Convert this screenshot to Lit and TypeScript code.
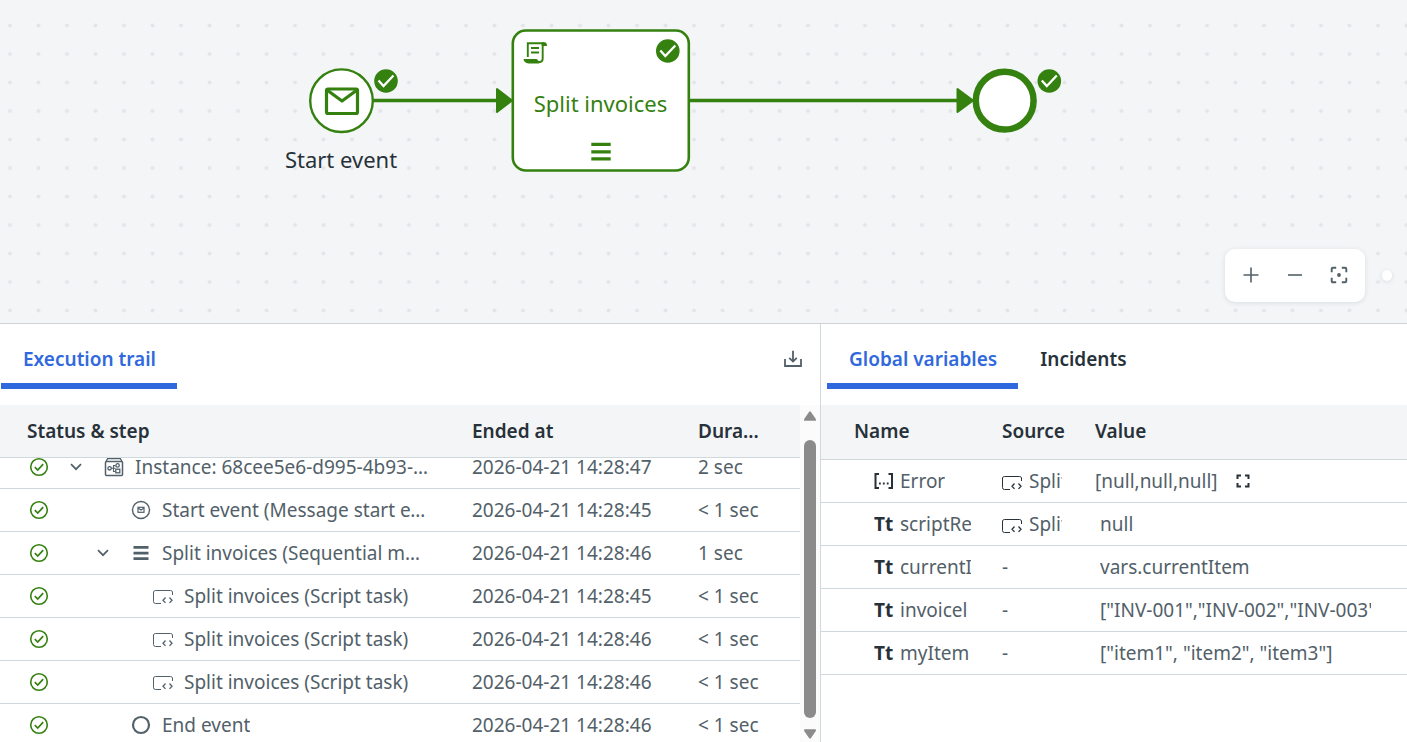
import { LitElement, html, css, svg, nothing } from "lit";
import { customElement } from "lit/decorators.js";
import { classMap } from "lit/directives/class-map.js";

type StepIcon = "instance" | "message" | "multi" | "script" | "end";

interface Step {
  level: "l0" | "l1" | "l2";
  open: boolean;
  icon: StepIcon;
  name: string;
  ended: string;
  duration: string;
}

interface Variable {
  name: string;
  list: boolean;
  source: string;
  value: string;
}

const STEPS: Step[] = [
  { level: "l0", open: true, icon: "instance", name: "Instance: 68cee5e6-d995-4b93-a1c7", ended: "2026-04-21 14:28:47", duration: "2 sec" },
  { level: "l1", open: false, icon: "message", name: "Start event (Message start event)", ended: "2026-04-21 14:28:45", duration: "< 1 sec" },
  { level: "l1", open: true, icon: "multi", name: "Split invoices (Sequential multi-instance)", ended: "2026-04-21 14:28:46", duration: "1 sec" },
  { level: "l2", open: false, icon: "script", name: "Split invoices (Script task)", ended: "2026-04-21 14:28:45", duration: "< 1 sec" },
  { level: "l2", open: false, icon: "script", name: "Split invoices (Script task)", ended: "2026-04-21 14:28:46", duration: "< 1 sec" },
  { level: "l2", open: false, icon: "script", name: "Split invoices (Script task)", ended: "2026-04-21 14:28:46", duration: "< 1 sec" },
  { level: "l1", open: false, icon: "end", name: "End event", ended: "2026-04-21 14:28:46", duration: "< 1 sec" },
];

const VARIABLES: Variable[] = [
  { name: "Error", list: true, source: "Split invoices", value: "[null,null,null]" },
  { name: "scriptResponse", list: false, source: "Split invoices", value: "null" },
  { name: "currentItem", list: false, source: "-", value: "vars.currentItem" },
  { name: "invoicel", list: false, source: "-", value: '["INV-001","INV-002","INV-003"]' },
  { name: "myItem", list: false, source: "-", value: '["item1", "item2", "item3"]' },
];

const scriptIcon = html`<svg width="20" height="16" viewBox="0 0 20 16" fill="none" stroke="currentColor" aria-hidden="true">
  <path d="M8 14.500H2.500A2 2 0 0 1 .5 12.500V3A2 2 0 0 1 2.500 1.500H17.500A2 2 0 0 1 19.500 3V6" stroke-width="1" />
  <path d="M12.500 8.500L10 11.200L12.500 13.900M16.500 8.500L19 11.200L16.500 13.900" stroke-width="1.300" />
</svg>`;

const STEP_ICONS: Record<StepIcon, unknown> = {
  instance: html`<svg width="20" height="20" viewBox="0 0 20 20" fill="none" stroke="currentColor" aria-hidden="true">
    <path d="M2 4.500L3.600 1.600H16.400L18 4.500" stroke-width="1.300" />
    <rect x="1.500" y="4.500" width="17" height="14" rx="1" stroke-width="1.500" />
    <circle cx="5.600" cy="11.300" r="1.700" stroke-width="1.300" />
    <path d="M7.300 11.300H11.500M9.500 11.300V8.600H11.500M9.500 11.300V14.500H11.500" stroke-width="1.100" />
    <circle cx="13.600" cy="8.400" r="1.700" stroke-width="1.300" />
    <rect x="11.800" y="12.200" width="4" height="3.600" stroke-width="1.300" />
  </svg>`,
  message: html`<svg width="20" height="20" viewBox="0 0 20 20" fill="none" stroke="currentColor" aria-hidden="true">
    <circle cx="10" cy="10" r="8.500" stroke-width="1.400" />
    <rect x="7" y="7.300" width="6" height="5" stroke-width="1.200" />
    <path d="M7 8L10 10L13 8" stroke-width="1.100" />
  </svg>`,
  multi: html`<svg width="20" height="20" viewBox="0 0 20 20" fill="currentColor" aria-hidden="true">
    <path d="M2.500 3H17.500V5.800H2.500ZM2.500 8.700H17.500V11.500H2.500ZM2.500 14.200H17.500V17H2.500Z" />
  </svg>`,
  script: scriptIcon,
  end: html`<svg width="20" height="20" viewBox="0 0 20 20" fill="none" stroke="currentColor" aria-hidden="true">
    <circle cx="10" cy="10" r="8" stroke-width="2.200" />
  </svg>`,
};

const statusIcon = html`<svg class="ok" width="20" height="20" viewBox="0 0 20 20" fill="none" stroke="currentColor" role="img" aria-label="Completed">
  <circle cx="10" cy="10" r="8.300" stroke-width="1.600" />
  <path d="M5.800 10.200L8.700 13L14.200 7.200" stroke-width="1.700" />
</svg>`;

const badge = (x: number, y: number) => svg`
  <circle class="fill" cx=${x} cy=${y} r="11.800" />
  <path class="tick" d="M${x - 7.5} ${y - 0.5}L${x - 2.5} ${y + 5}L${x + 7.5} ${y - 5.5}" />`;

@customElement("process-diagram")
export class ProcessDiagram extends LitElement {
  static styles = css`
    :host { display: block; position: relative; overflow: hidden; background: #f3f5f7; }
    .board { display: block; width: 100%; height: 100%; }
    .dot { fill: #e3e5e8; }
    .shape { fill: #fff; stroke: #35810f; }
    .line { fill: none; stroke: #35810f; }
    .fill { fill: #35810f; }
    .tick { fill: none; stroke: #fff; stroke-width: 2.3; }
    .label { font: 400 22px "Noto Sans", sans-serif; text-anchor: middle; fill: #273139; }
    .task { fill: #35810f; }
    .tools { position: absolute; right: 15px; bottom: 21px; display: flex; align-items: center; gap: 17px; }
    .zoom { display: flex; align-items: center; gap: 5px; padding: 6px 7px 6px 6px; border-radius: 10px; background: #fff; box-shadow: 0 1px 5px rgba(39, 49, 57, 0.12); }
    .btn { display: grid; place-items: center; width: 39px; height: 41px; padding: 0 0 2px; border: 0; background: none; color: #526069; }
    .knob { width: 10px; height: 11px; border-radius: 5px; background: #fff; box-shadow: 0 1px 4px rgba(39, 49, 57, 0.12); }
  `;

  render() {
    return html`
      <svg class="board" role="img" aria-label="Process diagram">
        <defs>
          <pattern id="dots" x="-4.250" y="11.250" width="28.500" height="28.500" patternUnits="userSpaceOnUse">
            <circle class="dot" cx="14.250" cy="14.250" r="2" />
          </pattern>
        </defs>
        <rect width="100%" height="100%" fill="url(#dots)" />

        <path class="line" stroke-width="3.600" d="M373 100.500H498M690 100.500H958" />
        <path class="fill line" stroke-width="2" stroke-linejoin="round" d="M497 89V112L512 100.500ZM957.500 89V112L973 100.500Z" />

        <circle class="shape" stroke-width="2.400" cx="341.500" cy="100.700" r="31.300" />
        <g class="line" stroke-width="3.200" stroke-linejoin="round">
          <rect x="326.500" y="89" width="31" height="24.500" rx="1.500" />
          <path d="M327 90L342 101L357 90" />
        </g>
        <text class="label" x="341" y="168">Start event</text>

        <rect class="shape" stroke-width="2.600" x="512.800" y="30.500" width="176" height="140" rx="13" />
        <g class="line" stroke-width="1.900">
          <path d="M527.800 57V43.200H544" />
          <path d="M542.700 43V58.500C542.700 61 541 62 539.500 62C537.500 62 536.500 60.500 536.500 59.500" />
          <path d="M531 48H539M531 52.500H539" />
        </g>
        <path class="fill" d="M541.700 42.200H544.500Q547 42.500 547 46H541.700ZM523.500 59H536.500L539.500 63.400H528.500Q524 63 523.500 59Z" />
        <text class="label task" x="600.500" y="112">Split invoices</text>
        <path class="fill" d="M591.300 142.800H610.700V146H591.300ZM591.300 150.200H610.700V153.400H591.300ZM591.300 157.200H610.700V160.400H591.300Z" />

        <circle class="shape" stroke-width="6.500" cx="1004.700" cy="100.700" r="28.900" />
        ${badge(386, 81)} ${badge(667.8, 51)} ${badge(1049.3, 81)}
      </svg>
      <div class="tools">
        <div class="zoom">
          <button class="btn" aria-label="Zoom in">
            <svg width="16" height="16" viewBox="0 0 16 16" fill="none" stroke="currentColor" stroke-width="1.600"><path d="M8 .5V15.500M.5 8H15.500" /></svg>
          </button>
          <button class="btn" aria-label="Zoom out">
            <svg width="16" height="16" viewBox="0 0 16 16" fill="none" stroke="currentColor" stroke-width="1.600"><path d="M1 8H15" /></svg>
          </button>
          <button class="btn" aria-label="Fit to screen">
            <svg width="18" height="18" viewBox="0 0 18 18" fill="none" stroke="currentColor" stroke-width="1.900">
              <path d="M1.700 6.200V3Q1.700 1.700 3 1.700H6.200M11.800 1.700H15Q16.300 1.700 16.300 3V6.200M16.300 11.800V15Q16.300 16.300 15 16.300H11.800M6.200 16.300H3Q1.700 16.300 1.700 15V11.800" />
              <circle cx="9" cy="9" r="1.900" fill="currentColor" stroke="none" />
            </svg>
          </button>
        </div>
        <div class="knob"></div>
      </div>
    `;
  }
}

const panelStyles = css`
  :host { display: flex; flex-direction: column; min-width: 0; min-height: 0; background: #fff; color: #526069; font: 400 19px/26px "Noto Sans", sans-serif; }
  .bar { display: flex; flex: none; align-items: flex-start; margin-bottom: 16px; }
  .tab { display: block; height: 65px; padding: 10px 21px 0 22px; border: 0; border-bottom: 6px solid transparent; background: none; color: #273139; font: 600 19px/26px "Noto Sans", sans-serif; text-align: center; white-space: nowrap; }
  .tab.on { border-color: #3069de; color: #3069de; }
  .grid { width: 100%; border-collapse: separate; border-spacing: 0; table-layout: fixed; }
  .grid th, .grid td { box-sizing: border-box; overflow: hidden; border-bottom: 1px solid #cfd8dd; text-align: left; white-space: nowrap; }
  .grid th { background: #f4f5f7; color: #273139; font-weight: 600; text-overflow: ellipsis; }
  .grid td { height: 43px; }
  .cell { display: flex; align-items: center; overflow: hidden; }
  .cell svg { flex: none; }
`;

@customElement("execution-trail")
export class ExecutionTrail extends LitElement {
  static styles = [
    panelStyles,
    css`
      .bar { justify-content: space-between; padding: 0 12px 0 1px; }
      .save { display: grid; place-items: center; width: 30px; height: 65px; padding: 5px 0 0; border: 0; background: none; color: #526069; }
      .body { display: flex; flex: 1; min-height: 0; }
      .scroll { flex: 1; min-width: 0; overflow-y: auto; scrollbar-width: none; }
      .track { display: flex; flex: none; flex-direction: column; align-items: center; width: 20px; padding: 6px 0 3px; box-sizing: border-box; background: #fbfbfb; color: #8b8b8b; }
      .thumb { flex: 1; width: 12px; margin: 19px 0 11px; border-radius: 6px; background: #8b8b8b; }
      .grid th { position: sticky; top: 0; z-index: 1; height: 53px; }
      .grid th, .grid td { padding: 0 0 1px 27px; }
      .ended { width: 226px; }
      .dur { width: 129px; }
      .grid th.last { padding-right: 36px; }
      .grid td.first { padding-left: 29px; }
      .ok { color: #35810f; }
      .toggle { display: grid; flex: none; place-items: center; width: 20px; height: 20px; padding: 0; border: 0; background: none; color: #526069; }
      .kind { display: grid; flex: none; place-items: center; width: 20px; height: 20px; margin: 0 11px 0 18px; }
      .l0 .toggle { margin-left: 17px; }
      .l1 .toggle { margin-left: 44px; }
      .l2 .toggle { margin-left: 66px; }
      .l2 .kind { padding-top: 2px; }
      .name { overflow: hidden; margin-right: 16px; text-overflow: ellipsis; }
    `,
  ];

  firstUpdated() {
    this.renderRoot.querySelector(".scroll")!.scrollTop = 12;
  }

  render() {
    return html`
      <div class="bar">
        <div role="tablist"><button class="tab on" role="tab" aria-selected="true">Execution trail</button></div>
        <button class="save" aria-label="Download">
          <svg width="18" height="18" viewBox="0 0 18 18" fill="none" stroke="currentColor" stroke-width="1.800">
            <path d="M9 .8V11.500M5.200 7.800L9 11.600L12.800 7.800M1 9V16H17V9" />
          </svg>
        </button>
      </div>
      <div class="body">
        <div class="scroll">
          <table class="grid">
            <colgroup><col /><col class="ended" /><col class="dur" /></colgroup>
            <thead><tr><th>Status &amp; step</th><th>Ended at</th><th class="last">Duration</th></tr></thead>
            <tbody>
              ${STEPS.map(
                (s) => html`<tr>
                  <td class="first">
                    <div class="cell ${s.level}">
                      ${statusIcon}
                      ${s.open
                        ? html`<button class="toggle" aria-label="Collapse">
                            <svg width="12" height="8" viewBox="0 0 12 8" fill="none" stroke="currentColor" stroke-width="1.700"><path d="M1 1.200L6 6.200L11 1.200" /></svg>
                          </button>`
                        : html`<span class="toggle"></span>`}
                      <span class="kind">${STEP_ICONS[s.icon]}</span>
                      <span class="name">${s.name}</span>
                    </div>
                  </td>
                  <td>${s.ended}</td>
                  <td>${s.duration}</td>
                </tr>`
              )}
            </tbody>
          </table>
        </div>
        <div class="track" aria-hidden="true">
          <svg width="12" height="10" viewBox="0 0 12 10" fill="currentColor"><path d="M5 1Q6 -.3 7 1L11.800 8Q12.400 9.800 11 9.800H1Q-.4 9.800 .2 8Z" /></svg>
          <div class="thumb"></div>
          <svg width="12" height="10" viewBox="0 0 12 10" fill="currentColor"><path d="M5 9Q6 10.300 7 9L11.800 2Q12.400 .2 11 .2H1Q-.4 .2 .2 2Z" /></svg>
        </div>
      </div>
    `;
  }
}

@customElement("variables-panel")
export class VariablesPanel extends LitElement {
  static styles = [
    panelStyles,
    css`
      :host { border-left: 1px solid #cfd8dd; }
      .bar { padding-left: 6px; }
      .name { width: 154px; }
      .source { width: 93px; }
      .grid th { height: 55px; }
      .grid th, .grid td { padding: 0 0 2px 27px; }
      .grid th:first-child { padding-left: 33px; }
      .grid td:first-child { padding: 0 4px 0 53px; }
      .grid td:nth-child(2) { padding: 0 6px 0 27px; }
      .grid td:last-child { padding: 0 36px 0 32px; }
      .grid tr.list td:last-child { padding-left: 27px; }
      .clip { overflow: hidden; }
      .type { flex: none; width: 20px; margin-right: 6px; color: #273139; }
      .type svg { display: block; }
      .tt { font-weight: 700; }
      .src { gap: 7px; }
      .src svg { margin-top: 3px; color: #273139; }
      .open { display: grid; flex: none; place-items: center; width: 20px; height: 20px; margin-left: 15px; padding: 0; border: 0; background: none; color: #273139; }
    `,
  ];

  render() {
    return html`
      <div class="bar" role="tablist">
        <button class="tab on" role="tab" aria-selected="true">Global variables</button>
        <button class="tab" role="tab" aria-selected="false">Incidents</button>
      </div>
      <table class="grid">
        <colgroup><col class="name" /><col class="source" /><col /></colgroup>
        <thead><tr><th>Name</th><th>Source</th><th>Value</th></tr></thead>
        <tbody>
          ${VARIABLES.map(
            (v) => html`<tr class=${classMap({ list: v.list })}>
              <td>
                <div class="cell">
                  <span class="type">${v.list
                    ? html`<svg width="20" height="18" viewBox="0 0 20 18" fill="none" stroke="currentColor" stroke-width="2" aria-label="List">
                        <path d="M5 2H1.500V16H5M14.500 2H18V16H14.500" />
                        <path d="M5 11.500H6.800M8.900 11.500H10.700M12.800 11.500H14.600" stroke-width="1.800" />
                      </svg>`
                    : html`<span class="tt">Tt</span>`}</span>
                  <span class="clip">${v.name}</span>
                </div>
              </td>
              <td><div class="cell src">${v.source === "-" ? nothing : scriptIcon}<span class="clip">${v.source}</span></div></td>
              <td>
                <div class="cell">
                  <span class="clip">${v.value}</span>
                  ${v.list
                    ? html`<button class="open" aria-label="Expand value">
                        <svg width="14" height="14" viewBox="0 0 14 14" fill="none" stroke="currentColor" stroke-width="2"><path d="M1.500 5V1.500H5M9 1.500H12.500V5M12.500 9V12.500H9M5 12.500H1.500V9" /></svg>
                      </button>`
                    : nothing}
                </div>
              </td>
            </tr>`
          )}
        </tbody>
      </table>
    `;
  }
}

@customElement("app-root")
export class AppRoot extends LitElement {
  static styles = css`
    :host { display: grid; grid-template-rows: minmax(0, 323fr) minmax(0, 419fr); height: 100vh; overflow: hidden; }
    .panels { display: grid; grid-template-columns: minmax(0, 820fr) minmax(0, 587fr); border-top: 1px solid #cfd3d7; min-height: 0; }
  `;

  render() {
    return html`
      <process-diagram></process-diagram>
      <div class="panels">
        <execution-trail></execution-trail>
        <variables-panel></variables-panel>
      </div>
    `;
  }
}
